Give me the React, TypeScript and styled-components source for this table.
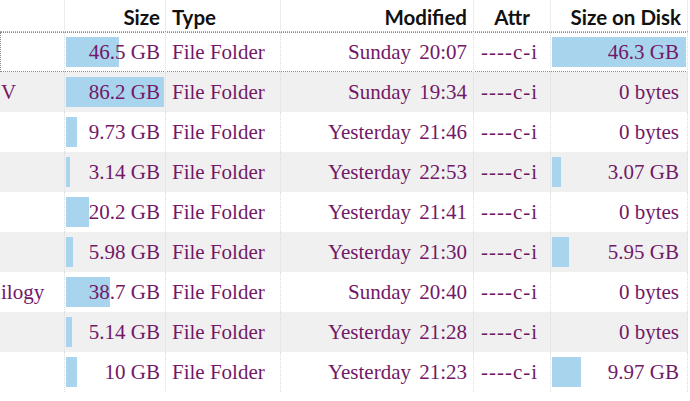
import React from "react";
import styled, { createGlobalStyle, css } from "styled-components";

const Global = createGlobalStyle`
  html, body { margin: 0; padding: 0; background: #ffffff; }
  body { width: 690px; height: 401px; overflow: hidden; }
`;

const COLS = "65px 101px 115px 193px 77px 137px";

const Table = styled.div`
  width: 688px;
  height: 401px;
  display: flex;
  flex-direction: column;
  background: #fff;
`;

const HeaderRow = styled.div`
  display: grid;
  grid-template-columns: ${COLS};
  height: 32px;
  border-bottom: 1px dotted #a8a8a8;
  box-sizing: border-box;
`;

const HeadCell = styled.div<{ $align?: "left" | "right" | "center" }>`
  display: flex;
  align-items: center;
  justify-content: ${(p) =>
    p.$align === "left" ? "flex-start" : p.$align === "center" ? "center" : "flex-end"};
  padding: 3px 6px 0 6px;
  box-sizing: border-box;
  border-right: 1px solid #ececec;
  font-family: Lato, "Liberation Sans", sans-serif;
  font-weight: 700;
  font-size: 20.5px;
  color: #111;
  white-space: nowrap;
  overflow: hidden;
`;

const Row = styled.div<{ $alt: boolean; $selected: boolean }>`
  display: grid;
  grid-template-columns: ${COLS};
  height: 40px;
  background: ${(p) => (p.$alt ? "#f0f0f0" : "#ffffff")};
  position: relative;
  ${(p) =>
    p.$selected &&
    css`
      outline: 1px dotted #8a8a8a;
      outline-offset: -1px;
    `}
`;

const Cell = styled.div<{ $align?: "left" | "right" }>`
  position: relative;
  display: flex;
  align-items: center;
  justify-content: ${(p) => (p.$align === "left" ? "flex-start" : "flex-end")};
  padding: 0 6px;
  box-sizing: border-box;
  border-right: 1px dotted #dcdcdc;
  font-family: "Liberation Serif", serif;
  font-size: 21px;
  color: #731867;
  white-space: nowrap;
  overflow: hidden;
`;

const NameCell = styled(Cell)`
  padding: 0 0 0 1px;
`;

const SizeCell = styled(Cell)`
  padding-right: 5px;
`;

const AttrCell = styled(Cell)`
  padding-left: 7px;
  letter-spacing: 1px;
`;

const DiskCell = styled(Cell)`
  padding-right: 8px;
  padding-left: 1px;
`;

const Bar = styled.div`
  position: absolute;
  left: 1px;
  top: 5px;
  bottom: 5px;
  background: #a8d4ee;
`;

const Label = styled.span`
  position: relative;
`;

const Day = styled.span`
  position: relative;
`;

const Time = styled.span`
  width: 50px;
  margin-left: 6px;
  text-align: right;
`;

type RowData = {
  name: string;
  size: string;
  sizeVal: number;
  day: string;
  time: string;
  disk: string;
  diskVal: number;
};

const rows: RowData[] = [
  { name: "", size: "46.5 GB", sizeVal: 46.5, day: "Sunday", time: "20:07", disk: "46.3 GB", diskVal: 46.3 },
  { name: "V", size: "86.2 GB", sizeVal: 86.2, day: "Sunday", time: "19:34", disk: "0 bytes", diskVal: 0 },
  { name: "", size: "9.73 GB", sizeVal: 9.73, day: "Yesterday", time: "21:46", disk: "0 bytes", diskVal: 0 },
  { name: "", size: "3.14 GB", sizeVal: 3.14, day: "Yesterday", time: "22:53", disk: "3.07 GB", diskVal: 3.07 },
  { name: "", size: "20.2 GB", sizeVal: 20.2, day: "Yesterday", time: "21:41", disk: "0 bytes", diskVal: 0 },
  { name: "", size: "5.98 GB", sizeVal: 5.98, day: "Yesterday", time: "21:30", disk: "5.95 GB", diskVal: 5.95 },
  { name: "ilogy", size: "38.7 GB", sizeVal: 38.7, day: "Sunday", time: "20:40", disk: "0 bytes", diskVal: 0 },
  { name: "", size: "5.14 GB", sizeVal: 5.14, day: "Yesterday", time: "21:28", disk: "0 bytes", diskVal: 0 },
  { name: "", size: "10 GB", sizeVal: 10, day: "Yesterday", time: "21:23", disk: "9.97 GB", diskVal: 9.97 },
];

const MAX_SIZE = 86.2;
const SIZE_BAR = 98;
const MAX_DISK = 46.3;
const DISK_BAR = 134;

export default function App() {
  return (
    <>
      <Global />
      <Table>
        <HeaderRow>
          <HeadCell />
          <HeadCell $align="right" style={{ paddingRight: 5 }}>Size</HeadCell>
          <HeadCell $align="left">Type</HeadCell>
          <HeadCell $align="right">Modified</HeadCell>
          <HeadCell $align="center">Attr</HeadCell>
          <HeadCell $align="right">Size on Disk</HeadCell>
        </HeaderRow>
        {rows.map((r, i) => (
          <Row key={i} $alt={i % 2 === 1} $selected={i === 0}>
            <NameCell $align="left">{r.name}</NameCell>
            <SizeCell>
              <Bar style={{ width: Math.max(2, (r.sizeVal / MAX_SIZE) * SIZE_BAR) }} />
              <Label>{r.size}</Label>
            </SizeCell>
            <Cell $align="left">File Folder</Cell>
            <Cell>
              <Day>{r.day}</Day>
              <Time>{r.time}</Time>
            </Cell>
            <AttrCell $align="left">----c-i</AttrCell>
            <DiskCell>
              {r.diskVal > 0 && <Bar style={{ width: (r.diskVal / MAX_DISK) * DISK_BAR }} />}
              <Label>{r.disk}</Label>
            </DiskCell>
          </Row>
        ))}
      </Table>
    </>
  );
}
